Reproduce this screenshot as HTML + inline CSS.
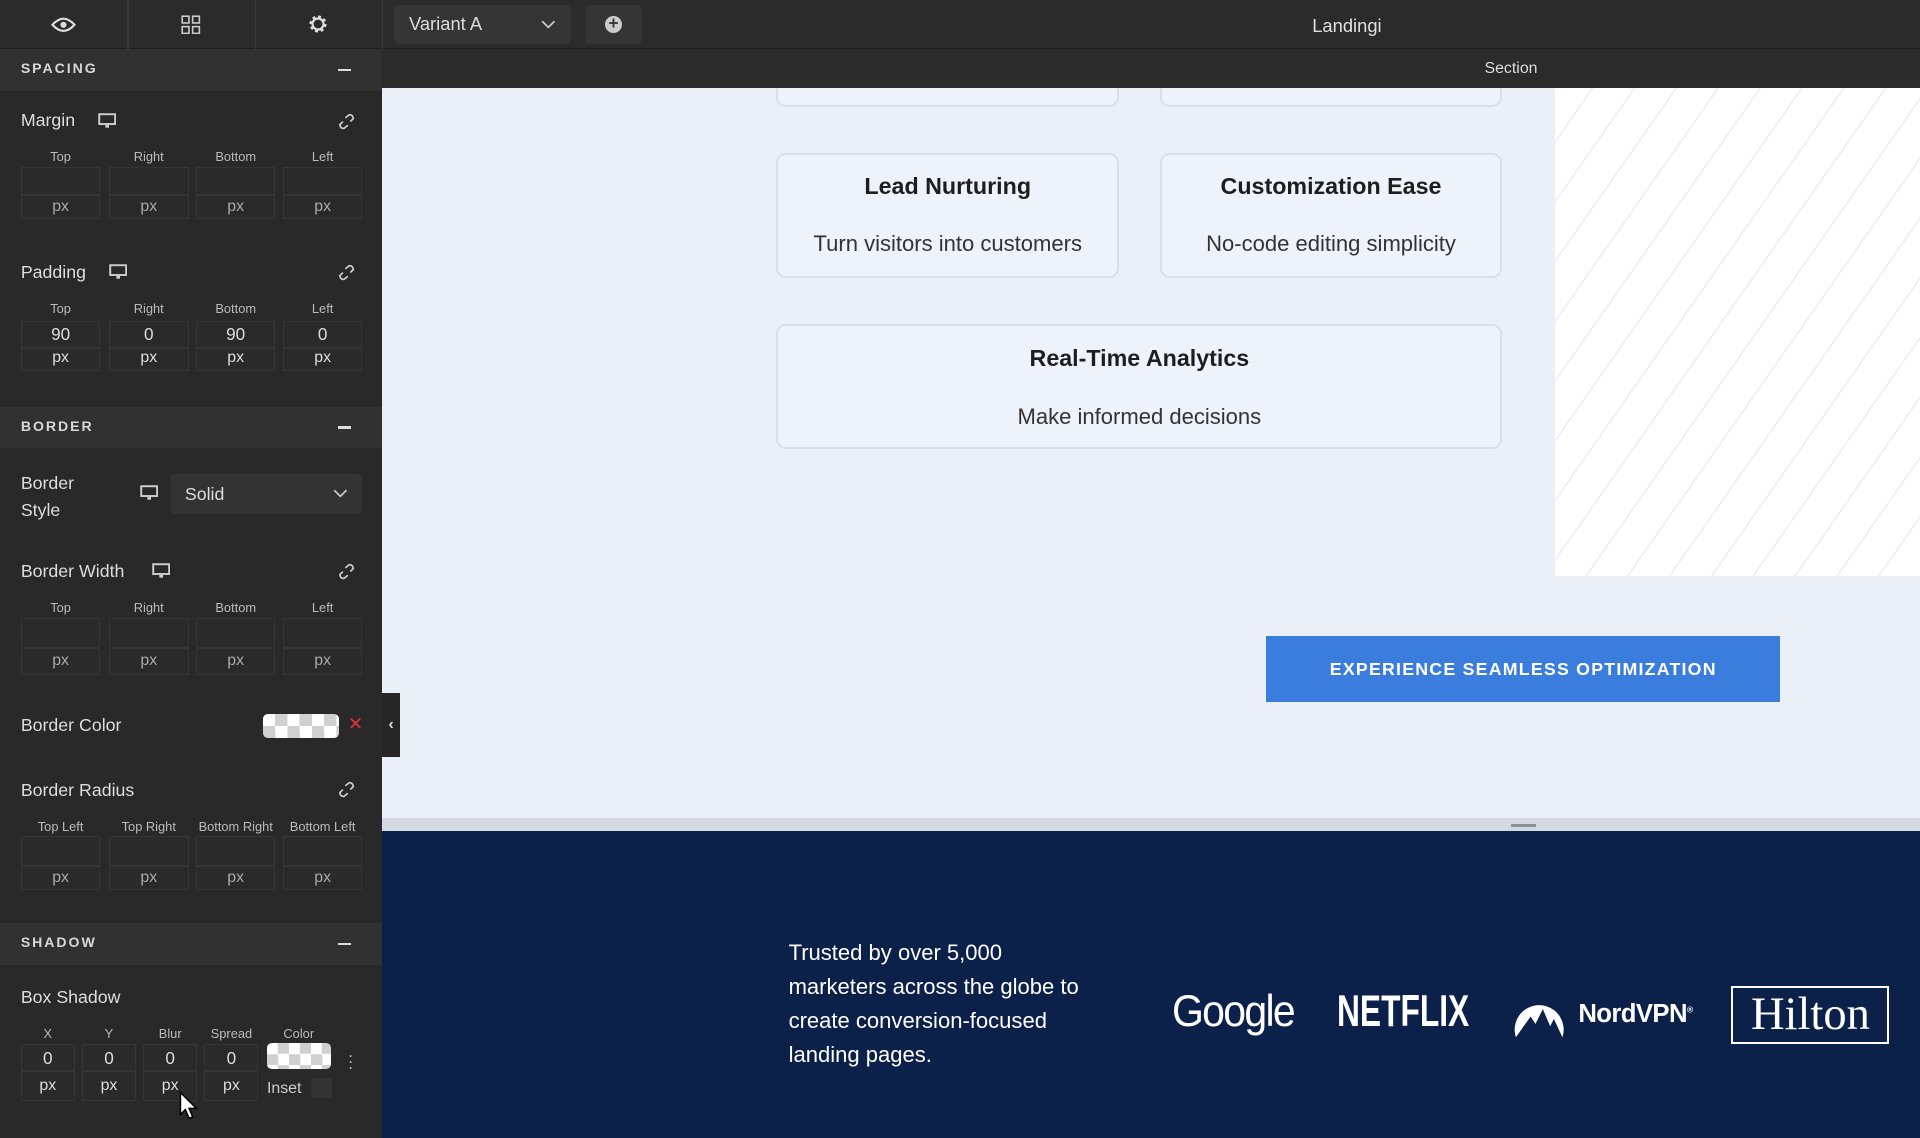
<!DOCTYPE html>
<html><head><meta charset="utf-8"><style>
*{margin:0;padding:0;box-sizing:border-box}
html,body{width:1920px;height:1138px;overflow:hidden;background:#262626}
#w{zoom:1.22449;width:1568px;height:930px;position:relative;font-family:"Liberation Sans",sans-serif;overflow:hidden}
.a{position:absolute}
.lp{left:0;top:40px;width:312px;height:890px;background:#292929}
.hd{left:0;width:312px;height:34px;background:#313131;color:#d8d8d8;font-size:11.5px;font-weight:bold;letter-spacing:1.6px;padding:9px 17px}
.hd i{position:absolute;right:25px;top:16px;width:11px;height:2px;background:#ddd}
.t{color:#ddd;font-size:14.5px}
.l{color:#bbb;font-size:10.5px;text-align:center}
.b{border:1px solid #353535;background:#2a2a2a;color:#aaa;font-size:13px;text-align:center}
.v{color:#ddd}
.card{background:#eef2fa;border:2px solid #d9dee8;border-radius:8px;text-align:center;color:#222}
.card h3{font-size:19px;font-weight:bold;margin-top:15px;color:#1e1e1e}
.card p{font-size:18px;margin-top:25px;color:#333}
.chk{background-color:#fff;background-image:conic-gradient(#d0d0d0 25%,transparent 0 50%,#d0d0d0 0 75%,transparent 0);background-size:20px 20px;border-radius:4px}
</style></head><body><div id="w">
<div class="a" style="left:0;top:0;width:1568px;height:40px;background:#2b2b2b;border-bottom:1px solid #1f1f1f"></div>
<div class="a" style="left:312px;top:40px;width:1256px;height:32px;background:#2b2b2b"></div>
<div class="a" style="left:104px;top:0;width:1px;height:40px;background:#3a3a3a"></div>
<div class="a" style="left:208px;top:0;width:1px;height:40px;background:#3a3a3a"></div>
<div class="a" style="left:312px;top:0;width:1px;height:40px;background:#3a3a3a"></div>
<svg class="a" style="left:41px;top:12px" width="22" height="16" viewBox="0 0 22 16"><path d="M2 8 Q11 -2 20 8 Q11 18 2 8Z" fill="none" stroke="#ddd" stroke-width="1.8"/><circle cx="11" cy="8" r="2.5" fill="#ddd"/></svg>
<svg class="a" style="left:148px;top:12px" width="16" height="16"><rect x="1" y="1" width="5.5" height="5.5" fill="none" stroke="#ccc" stroke-width="1.3"/><rect x="9.5" y="1" width="5.5" height="5.5" fill="none" stroke="#ccc" stroke-width="1.3"/><rect x="1" y="9.5" width="5.5" height="5.5" fill="none" stroke="#ccc" stroke-width="1.3"/><rect x="9.5" y="9.5" width="5.5" height="5.5" fill="none" stroke="#ccc" stroke-width="1.3"/></svg>
<svg class="a" style="left:251px;top:11px" width="18" height="18" viewBox="0 0 18 18"><circle cx="9" cy="9" r="5.5" fill="none" stroke="#ddd" stroke-width="3" stroke-dasharray="2.2 2.1"/><circle cx="9" cy="9" r="4.5" fill="none" stroke="#ddd" stroke-width="1.8"/></svg>
<div class="a" style="left:322px;top:4px;width:144px;height:32px;background:#353535;border-radius:4px;color:#ddd;font-size:15px;padding:7px 12px">Variant A<svg class="a" style="left:120px;top:12px" width="12" height="8"><path d="M1 1 L6 6 L11 1" fill="none" stroke="#ccc" stroke-width="1.4"/></svg></div>
<div class="a" style="left:478px;top:4px;width:46px;height:32px;background:#353535;border-radius:4px"><div class="a" style="left:16px;top:9px;width:14px;height:14px;border-radius:50%;background:#ccc;color:#333;font-size:14px;line-height:13px;text-align:center;font-weight:bold">+</div></div>
<div class="a" style="left:1040px;top:12px;width:120px;text-align:center;color:#e0e0e0;font-size:15px">Landingi</div>
<div class="a" style="left:1180px;top:49px;width:108px;text-align:center;color:#ddd;font-size:13px">Section</div>

<div class="a lp"></div>
<div class="a hd" style="top:40px">SPACING<i></i></div>
<div class="a hd" style="top:332px">BORDER<i></i></div>
<div class="a hd" style="top:754px">SHADOW<i></i></div>

<div class="a t" style="left:17px;top:90px">Margin</div>
<div class="a t" style="left:17px;top:214px">Padding</div>
<div class="a t" style="left:17px;top:384px;line-height:22px">Border<br>Style</div>
<div class="a t" style="left:17px;top:458px">Border Width</div>
<div class="a t" style="left:17px;top:584px">Border Color</div>
<div class="a t" style="left:17px;top:637px">Border Radius</div>
<div class="a t" style="left:17px;top:806px">Box Shadow</div>
<svg class="a" style="left:80px;top:92px" width="15" height="13"><rect x="1" y="1" width="13" height="8" fill="none" stroke="#ccc" stroke-width="1.6"/><rect x="6" y="9" width="3" height="3" fill="#ccc"/></svg>
<svg class="a" style="left:89px;top:216px" width="15" height="13"><rect x="1" y="1" width="13" height="8" fill="none" stroke="#ccc" stroke-width="1.6"/><rect x="6" y="9" width="3" height="3" fill="#ccc"/></svg>
<svg class="a" style="left:114px;top:396px" width="15" height="13"><rect x="1" y="1" width="13" height="8" fill="none" stroke="#ccc" stroke-width="1.6"/><rect x="6" y="9" width="3" height="3" fill="#ccc"/></svg>
<svg class="a" style="left:124px;top:460px" width="15" height="13"><rect x="1" y="1" width="13" height="8" fill="none" stroke="#ccc" stroke-width="1.6"/><rect x="6" y="9" width="3" height="3" fill="#ccc"/></svg>
<svg class="a" style="left:276px;top:92px" width="14" height="14"><path d="M6 4 L9 1.5 Q12 1 12.5 4.5 L10 7 M8 10 L5 12.5 Q2 13 1.5 9.5 L4 7" fill="none" stroke="#ccc" stroke-width="1.4"/></svg>
<svg class="a" style="left:276px;top:216px" width="14" height="14"><path d="M6 4 L9 1.5 Q12 1 12.5 4.5 L10 7 M8 10 L5 12.5 Q2 13 1.5 9.5 L4 7" fill="none" stroke="#ccc" stroke-width="1.4"/></svg>
<svg class="a" style="left:276px;top:460px" width="14" height="14"><path d="M6 4 L9 1.5 Q12 1 12.5 4.5 L10 7 M8 10 L5 12.5 Q2 13 1.5 9.5 L4 7" fill="none" stroke="#ccc" stroke-width="1.4"/></svg>
<svg class="a" style="left:276px;top:638px" width="14" height="14"><path d="M6 4 L9 1.5 Q12 1 12.5 4.5 L10 7 M8 10 L5 12.5 Q2 13 1.5 9.5 L4 7" fill="none" stroke="#ccc" stroke-width="1.4"/></svg>

<!-- margin -->
<div class="a l" style="left:17px;top:122px;width:65px">Top</div><div class="a l" style="left:89px;top:122px;width:65px">Right</div><div class="a l" style="left:160px;top:122px;width:65px">Bottom</div><div class="a l" style="left:231px;top:122px;width:65px">Left</div>
<div class="a b" style="left:17px;top:136px;width:65px;height:23px"></div><div class="a b" style="left:89px;top:136px;width:65px;height:23px"></div><div class="a b" style="left:160px;top:136px;width:65px;height:23px"></div><div class="a b" style="left:231px;top:136px;width:65px;height:23px"></div>
<div class="a b" style="left:17px;top:159px;width:65px;height:20px;padding-top:2px">px</div><div class="a b" style="left:89px;top:159px;width:65px;height:20px;padding-top:2px">px</div><div class="a b" style="left:160px;top:159px;width:65px;height:20px;padding-top:2px">px</div><div class="a b" style="left:231px;top:159px;width:65px;height:20px;padding-top:2px">px</div>
<!-- padding -->
<div class="a l" style="left:17px;top:246px;width:65px">Top</div><div class="a l" style="left:89px;top:246px;width:65px">Right</div><div class="a l" style="left:160px;top:246px;width:65px">Bottom</div><div class="a l" style="left:231px;top:246px;width:65px">Left</div>
<div class="a b v" style="left:17px;top:262px;width:65px;height:22px;font-size:14px;padding-top:2px">90</div><div class="a b v" style="left:89px;top:262px;width:65px;height:22px;font-size:14px;padding-top:2px">0</div><div class="a b v" style="left:160px;top:262px;width:65px;height:22px;font-size:14px;padding-top:2px">90</div><div class="a b v" style="left:231px;top:262px;width:65px;height:22px;font-size:14px;padding-top:2px">0</div>
<div class="a b v" style="left:17px;top:284px;width:65px;height:19px">px</div><div class="a b v" style="left:89px;top:284px;width:65px;height:19px">px</div><div class="a b v" style="left:160px;top:284px;width:65px;height:19px">px</div><div class="a b v" style="left:231px;top:284px;width:65px;height:19px">px</div>
<!-- border style -->
<div class="a" style="left:140px;top:387px;width:156px;height:33px;background:#333;border-radius:3px;color:#ddd;font-size:14.5px;padding:8px 11px">Solid<svg class="a" style="left:132px;top:12px" width="12" height="8"><path d="M1 1 L6 6 L11 1" fill="none" stroke="#ccc" stroke-width="1.4"/></svg></div>
<!-- border width -->
<div class="a l" style="left:17px;top:490px;width:65px">Top</div><div class="a l" style="left:89px;top:490px;width:65px">Right</div><div class="a l" style="left:160px;top:490px;width:65px">Bottom</div><div class="a l" style="left:231px;top:490px;width:65px">Left</div>
<div class="a b" style="left:17px;top:505px;width:65px;height:24px"></div><div class="a b" style="left:89px;top:505px;width:65px;height:24px"></div><div class="a b" style="left:160px;top:505px;width:65px;height:24px"></div><div class="a b" style="left:231px;top:505px;width:65px;height:24px"></div>
<div class="a b" style="left:17px;top:529px;width:65px;height:22px;padding-top:3px">px</div><div class="a b" style="left:89px;top:529px;width:65px;height:22px;padding-top:3px">px</div><div class="a b" style="left:160px;top:529px;width:65px;height:22px;padding-top:3px">px</div><div class="a b" style="left:231px;top:529px;width:65px;height:22px;padding-top:3px">px</div>
<!-- border color -->
<div class="a chk" style="left:215px;top:583px;width:62px;height:20px"></div>
<div class="a" style="left:284px;top:582px;color:#e03030;font-size:15px">✕</div>
<!-- radius -->
<div class="a l" style="left:17px;top:669px;width:65px">Top Left</div><div class="a l" style="left:89px;top:669px;width:65px">Top Right</div><div class="a l" style="left:160px;top:669px;width:65px">Bottom Right</div><div class="a l" style="left:231px;top:669px;width:65px">Bottom Left</div>
<div class="a b" style="left:17px;top:683px;width:65px;height:24px"></div><div class="a b" style="left:89px;top:683px;width:65px;height:24px"></div><div class="a b" style="left:160px;top:683px;width:65px;height:24px"></div><div class="a b" style="left:231px;top:683px;width:65px;height:24px"></div>
<div class="a b" style="left:17px;top:707px;width:65px;height:20px;padding-top:2px">px</div><div class="a b" style="left:89px;top:707px;width:65px;height:20px;padding-top:2px">px</div><div class="a b" style="left:160px;top:707px;width:65px;height:20px;padding-top:2px">px</div><div class="a b" style="left:231px;top:707px;width:65px;height:20px;padding-top:2px">px</div>
<!-- shadow -->
<div class="a l" style="left:17px;top:838px;width:44px">X</div><div class="a l" style="left:67px;top:838px;width:44px">Y</div><div class="a l" style="left:117px;top:838px;width:44px">Blur</div><div class="a l" style="left:167px;top:838px;width:44px">Spread</div><div class="a l" style="left:220px;top:838px;width:48px">Color</div>
<div class="a b v" style="left:17px;top:853px;width:44px;height:22px;font-size:14px;padding-top:2px">0</div><div class="a b v" style="left:67px;top:853px;width:44px;height:22px;font-size:14px;padding-top:2px">0</div><div class="a b v" style="left:117px;top:853px;width:44px;height:22px;font-size:14px;padding-top:2px">0</div><div class="a b v" style="left:167px;top:853px;width:44px;height:22px;font-size:14px;padding-top:2px">0</div>
<div class="a b v" style="left:17px;top:875px;width:44px;height:24px;padding-top:4px">px</div><div class="a b v" style="left:67px;top:875px;width:44px;height:24px;padding-top:4px">px</div><div class="a b v" style="left:117px;top:875px;width:44px;height:24px;padding-top:4px">px</div><div class="a b v" style="left:167px;top:875px;width:44px;height:24px;padding-top:4px">px</div>
<div class="a chk" style="left:218px;top:852px;width:52px;height:21px;background-size:18px 18px"></div>
<div class="a" style="left:218px;top:882px;color:#ccc;font-size:13px">Inset</div>
<div class="a" style="left:254px;top:880px;width:17px;height:17px;background:#333;border-radius:2px"></div>
<div class="a" style="left:284px;top:859px;color:#bbb;font-size:14px;line-height:5px">·<br>·<br>·</div>
<svg class="a" style="left:145px;top:890px" width="18" height="26"><path d="M2 2 L2 20 L6 16 L9 23 L12 22 L9 15 L15 15 Z" fill="#fff" stroke="#000" stroke-width="1.2"/></svg>

<!-- canvas -->
<div class="a" style="left:312px;top:72px;width:1256px;height:596px;background:#eaeff8;overflow:hidden">
<div class="a" style="left:958px;top:0;width:298px;height:398px;background:#fff repeating-linear-gradient(-55deg,#fff 0 27px,#e8ebef 27px 28px)"></div>
<div class="a card" style="left:322px;top:-40px;width:280px;height:55px"></div>
<div class="a card" style="left:635px;top:-40px;width:280px;height:55px"></div>
<div class="a card" style="left:322px;top:53px;width:280px;height:102px"><h3>Lead Nurturing</h3><p>Turn visitors into customers</p></div>
<div class="a card" style="left:635px;top:53px;width:280px;height:102px"><h3>Customization Ease</h3><p>No-code editing simplicity</p></div>
<div class="a card" style="left:322px;top:193px;width:593px;height:102px"><h3>Real-Time Analytics</h3><p style="margin-top:26px">Make informed decisions</p></div>
<div class="a" style="left:722px;top:447px;width:420px;height:54px;background:#3b7ddd;color:#fff;font-size:14.5px;font-weight:bold;letter-spacing:1px;text-align:center;line-height:54px">EXPERIENCE SEAMLESS OPTIMIZATION</div>
</div>
<div class="a" style="left:312px;top:668px;width:1256px;height:11px;background:#d4d9e1"></div>
<div class="a" style="left:1234px;top:673px;width:20px;height:2px;background:#8a8f98"></div>
<div class="a" style="left:312px;top:566px;width:15px;height:52px;background:#262626;color:#ddd;font-size:13px;line-height:52px;text-align:center;font-weight:bold">‹</div>

<!-- footer -->
<div class="a" style="left:312px;top:679px;width:1256px;height:251px;background:#0b2149"></div>
<div class="a" style="left:644px;top:764px;width:258px;color:#fff;font-size:18px;line-height:28px">Trusted by over 5,000 marketers across the globe to create conversion-focused landing pages.</div>
<div class="a" style="left:957px;top:806px;color:#fff;font-size:36px;letter-spacing:-1.5px;transform:scaleX(0.93);transform-origin:left">Google</div>
<div class="a" style="left:1092px;top:806px;color:#fff;font-size:36px;font-weight:bold;transform:scaleX(0.72);transform-origin:left">NETFLIX</div>
<svg class="a" style="left:1234px;top:810px" width="46" height="38" viewBox="0 0 46 38"><path d="M4 37 A20 20 0 1 1 42 37 L35 22 L32 28 L26 14 L20 26 L16 20 Z" fill="#fff"/></svg>
<div class="a" style="left:1289px;top:817px;color:#fff;font-size:21px;font-weight:bold;letter-spacing:-0.5px">NordVPN<sup style="font-size:7px">®</sup></div>
<div class="a" style="left:1414px;top:805px;width:129px;height:48px;border:2px solid #fff;color:#fff;font-family:'Liberation Serif',serif;font-size:38px;text-align:center;line-height:44px">Hilton</div>
</div></body></html>
